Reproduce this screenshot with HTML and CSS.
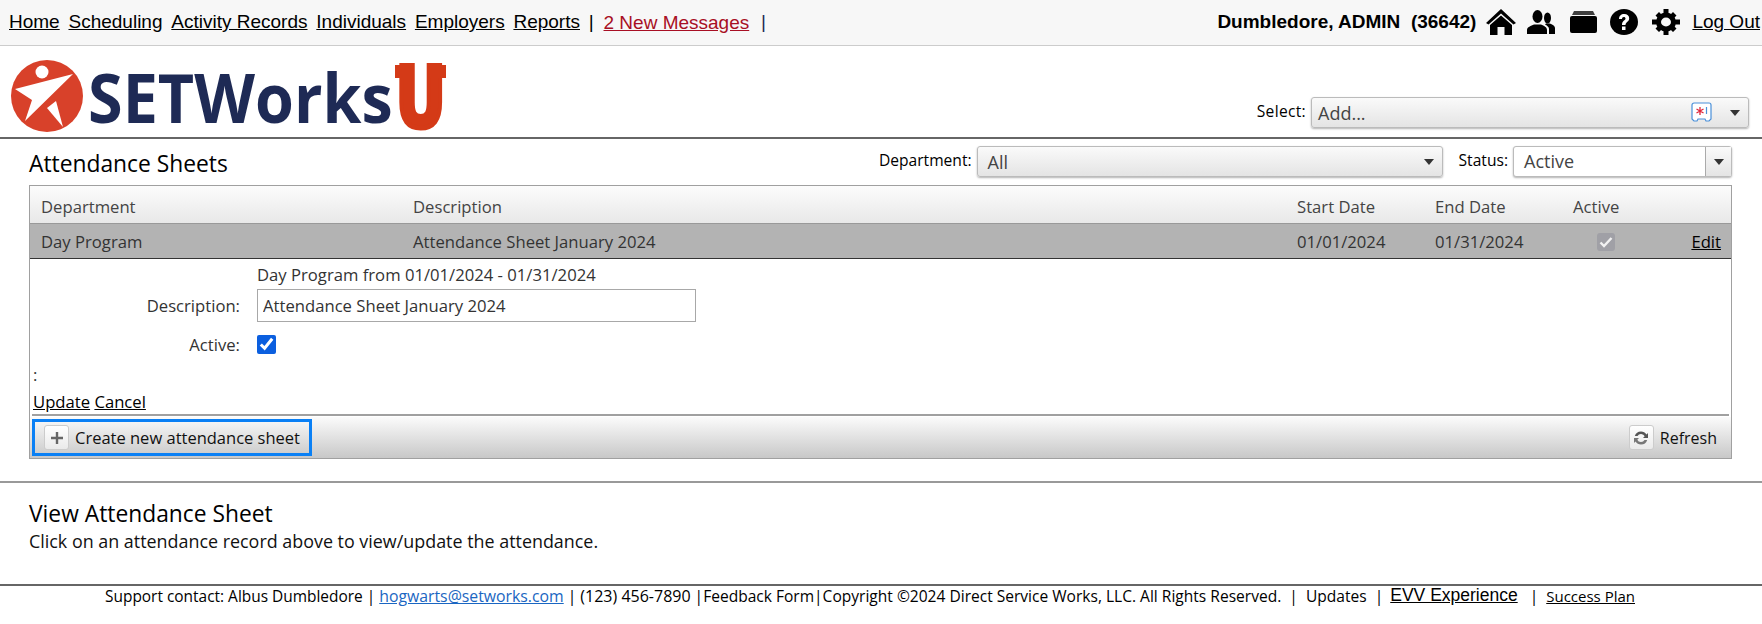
FILE: index.html
```html
<!DOCTYPE html>
<html lang="en">
<head>
<meta charset="utf-8">
<title>Attendance Sheets</title>
<link rel="stylesheet" href="styles.css">
</head>
<body>
<header class="topbar">
  <nav class="nav">
    <a href="#">Home</a><a href="#">Scheduling</a><a href="#">Activity Records</a><a href="#">Individuals</a><a href="#">Employers</a><a href="#">Reports</a>
    <span class="pipe">|</span>
    <a href="#" class="msg">2 New Messages</a>
    <span class="pipe navy">|</span>
  </nav>
  <div class="user">
    <b class="who">Dumbledore, ADMIN&nbsp; (36642)</b>
    <svg class="ic" width="30" height="26" viewBox="0 0 30 26"><path d="M15 0 L30 14 L27.500 15.500 L15 4.500 L2.500 15.500 L0 14Z"/><path d="M15 6.500 L26 16 V26 H18.500 V18 H11.500 V26 H4 V16Z"/></svg>
    <svg class="ic ic-p" width="28" height="24" viewBox="0 0 28 24"><ellipse cx="10.500" cy="6.500" rx="5" ry="6.500"/><path d="M0 24V20c0-3 4-4 7-5.500h7c3 1.500 6 2.500 6 5.500v4Z"/><ellipse cx="20.500" cy="8" rx="3.500" ry="5.500"/><path d="M19 13.500h4c2 1 5 2 5 4.500v6h-6v-5c0-2-2-3.500-4-4.500Z"/></svg>
    <svg class="ic ic-f" width="27" height="22" viewBox="0 0 27 22"><path d="M4 0h19l2 4H2Z" opacity=".75"/><rect y="5" width="27" height="17" rx="2"/></svg>
    <svg class="ic ic-q" width="28" height="26" viewBox="0 0 28 26"><ellipse cx="14" cy="13" rx="14" ry="13"/><path d="M9 10c0-3 2-5 5.200-5 3 0 5 1.800 5 4.300 0 3.700-3.700 3.700-3.700 6.700h-3.500c0-4.500 3.500-4.500 3.500-6.500 0-1-.7-1.600-1.700-1.600-1.100 0-1.800.8-1.800 2.100Z" fill="#fff"/><rect x="12" y="17.500" width="3.500" height="3.500" fill="#fff"/></svg>
    <svg class="ic ic-g" width="28" height="26" viewBox="0 0 28 26"><ellipse cx="14" cy="13" rx="7.500" ry="7" fill="none" stroke="#000" stroke-width="5"/><path d="M11.500 0h5v5h-5ZM11.500 21h5v5h-5ZM0 10.500h5v5H0ZM23 10.500h5v5h-5ZM3.500 6.500l3.500-3.500 3.500 3.500-3.500 3.500ZM17.500 6.500l3.500-3.500 3.500 3.500-3.500 3.500ZM3.500 19.500l3.500-3.500 3.500 3.500-3.500 3.500ZM17.500 19.500l3.500-3.500 3.500 3.500-3.500 3.500Z"/></svg>
    <a href="#" class="logout">Log Out</a>
  </div>
</header>

<section class="brand">
  <svg class="logo" width="440" height="76" viewBox="0 0 440 76">
    <circle cx="37" cy="36" r="36" fill="#d8412a"/>
    <circle cx="32" cy="12" r="6.500" fill="#fff"/>
    <polygon points="63,14 5,29 22,40 15,61" fill="#fff"/>
    <polygon points="37,48 46,41 53,67" fill="#fff"/>
    <text class="logo-word" transform="translate(78 63) scale(.925 1)">SETWorks</text>
    <text class="logo-u" transform="translate(385.500 67) scale(.74 1)">U</text>
    <rect class="logo-slab" x="385" y="5" width="19" height="13"/>
    <rect class="logo-slab" x="418" y="5" width="18" height="13"/>
  </svg>
  <div class="field select-field">
    <label class="flabel select-label">Select:</label>
    <div class="drop drop-add">
      <span class="drop-text">Add...</span>
      <svg class="add-ic" width="21" height="21" viewBox="0 0 21 21"><path d="M3 1h15a2 2 0 0 1 2 2v14l-2 2h-3l-1-2H7l-1 2H3l-2-2V3a2 2 0 0 1 2-2Z" fill="#fff" stroke="#4a90d9" stroke-width="1.200"/><path d="M9 5v8M5.500 7l7 4M12.500 7l-7 4" stroke="#e0283c" stroke-width="1.300"/><path d="M15.500 5v7" stroke="#4a90d9" stroke-width="1.200"/></svg>
      <i class="arrow"></i>
    </div>
  </div>
</section>

<main class="main">
  <div class="titlebar">
    <h1 class="title">Attendance Sheets</h1>
    <div class="filters">
      <div class="field">
        <label class="flabel">Department:</label>
        <div class="drop drop-dept"><span class="drop-text">All</span><i class="arrow"></i></div>
      </div>
      <div class="field">
        <label class="flabel">Status:</label>
        <div class="combo"><span class="combo-text">Active</span><span class="combo-btn"><i class="arrow"></i></span></div>
      </div>
    </div>
  </div>

  <div class="grid">
    <div class="cols head">
      <span>Department</span><span>Description</span><span>Start Date</span><span>End Date</span><span>Active</span><span></span>
    </div>
    <div class="cols row">
      <span>Day Program</span><span>Attendance Sheet January 2024</span><span>01/01/2024</span><span>01/31/2024</span>
      <span class="cell-check"><span class="row-check"><svg width="14" height="12" viewBox="0 0 14 12"><path d="M1.500 6.500l3.500 3.500 7.500-8" fill="none" stroke="#f2f2f2" stroke-width="2.400"/></svg></span></span>
      <a href="#" class="edit">Edit</a>
    </div>
    <div class="editor">
      <div class="form">
        <span></span><span class="form-line">Day Program from 01/01/2024 - 01/31/2024</span>
        <label class="form-label">Description:</label><input class="text-input" type="text" value="Attendance Sheet January 2024">
        <label class="form-label">Active:</label><input class="form-check" type="checkbox" checked>
      </div>
      <div class="colon">:</div>
      <div class="actions"><a href="#">Update</a> <a href="#">Cancel</a></div>
    </div>
    <div class="rule"></div>
    <div class="toolbar">
      <a href="#" class="create">
        <span class="tool-ic"><svg width="12" height="12" viewBox="0 0 12 12"><path d="M4.800 0h2.400v4.800H12v2.400H7.200V12H4.800V7.200H0V4.800h4.800Z" fill="#666"/></svg></span>
        Create new attendance sheet
      </a>
      <a href="#" class="refresh">
        <span class="tool-ic"><svg width="16" height="16" viewBox="0 0 16 16"><path d="M8 1.500a6.500 6.500 0 0 1 5.500 3L15 3v5h-5l1.700-1.700A4 4 0 0 0 4.500 6H1.800A6.500 6.500 0 0 1 8 1.500Z" fill="#555"/><path d="M8 14.500a6.500 6.500 0 0 1-5.500-3L1 13V8h5L4.300 9.700A4 4 0 0 0 11.500 10h2.700A6.500 6.500 0 0 1 8 14.500Z" fill="#777"/></svg></span>
        Refresh
      </a>
    </div>
  </div>
</main>

<section class="view">
  <h2 class="title">View Attendance Sheet</h2>
  <p class="view-text">Click on an attendance record above to view/update the attendance.</p>
</section>

<footer class="footer">
  <span class="foot-lead">Support contact: Albus Dumbledore&nbsp;|&nbsp;</span><a href="#" class="mail">hogwarts@setworks.com</a><span>&nbsp;|&nbsp;</span><span class="phone">(123) 456-7890</span><span>&nbsp;|Feedback Form|Copyright ©2024 Direct Service Works, LLC. All Rights Reserved. &nbsp;|&nbsp; Updates &nbsp;|&nbsp;</span>
  <a href="#" class="evv">EVV Experience</a><span class="foot-sep">|</span>
  <a href="#" class="plan">Success Plan</a>
</footer>
</body>
</html>
```
FILE: styles.css
```css
* { box-sizing: border-box; }
html, body { margin: 0; padding: 0; }
html { height: 624px; overflow: hidden; }
body {
  width: 1762px;
  height: 624px;
  overflow: hidden;
  background: #fff;
  color: #000;
  font-family: "Open Sans", "Liberation Sans", sans-serif;
}
a { color: inherit; }

/* top bar */
.topbar {
  height: 46px;
  background: #f7f7f7;
  border-bottom: 1px solid #ccc;
  display: flex;
  justify-content: space-between;
  align-items: center;
  font-family: "Liberation Sans", Arial, sans-serif;
  font-size: 19px;
  padding: 0 2px 1px 9px;
}
.nav { display: flex; align-items: center; gap: 8.8px; }
.navy { color: #1e2a55; margin-left: 3px; }
.msg { color: #a80f24; margin: 1px 0 0 1px; }
.user { display: flex; align-items: center; }
.who { margin-right: 10px; }
.ic { display: block; margin-right: 11px; }
.ic-p { margin-right: 15px; }
.ic-f { margin-right: 13px; }
.ic-q { margin-right: 14px; }
.ic-g { margin-right: 12px; }

/* brand row */
.brand {
  height: 93px;
  border-bottom: 2px solid #666;
  display: flex;
  justify-content: space-between;
  padding: 14px 13px 0 10px;
}
.logo { display: block; overflow: visible; }
.logo-word {
  font-family: "Open Sans", sans-serif;
  font-weight: 700;
  font-size: 68px;
  fill: #1e2a55;
}
.logo-u {
  font-family: "DejaVu Sans", sans-serif;
  font-weight: 700;
  font-size: 84px;
  fill: #d43a17;
  stroke: #d43a17;
  stroke-width: 5px;
}
.logo-slab { fill: #d43a17; }
.select-field { align-self: flex-end; margin-bottom: 9px; }
.field { display: flex; align-items: center; gap: 5px; }
.flabel { font-size: 15.6px; margin-top: -3px; }
.select-label { letter-spacing: .3px; }
.drop {
  height: 31px;
  border: 1px solid #bbb;
  border-radius: 3px;
  background: linear-gradient(#fafafa, #e4e4e4);
  box-shadow: 0 1px 2px rgba(0,0,0,.3);
  display: flex;
  align-items: center;
  padding: 0 4px 0 6px;
  color: #444;
  font-size: 18px;
}
.drop-text { flex: 1; }
.drop-add { width: 438px; }
.drop-dept { width: 466px; margin-right: 16px; padding-left: 10px; }
.add-ic { display: block; margin-right: 18px; }
.arrow {
  display: block;
  width: 0;
  height: 0;
  margin: 0 4px 0 0;
  border-left: 5px solid transparent;
  border-right: 5px solid transparent;
  border-top: 6px solid #333;
}
.combo {
  width: 219px;
  height: 31px;
  border: 1px solid #bbb;
  border-radius: 3px;
  background: #fff;
  box-shadow: 0 1px 2px rgba(0,0,0,.3);
  display: flex;
  color: #444;
  font-size: 18px;
}
.combo-text { flex: 1; padding-left: 10px; line-height: 29px; }
.combo-btn {
  width: 26px;
  border-left: 1px solid #aaa;
  background: linear-gradient(#fafafa, #e4e4e4);
  display: flex;
  align-items: center;
  justify-content: center;
}
.combo-btn .arrow { margin: 0; }

/* main */
.main { padding: 7px 30px 0 29px; }
.titlebar { display: flex; justify-content: space-between; align-items: flex-start; height: 39px; }
.titlebar .title { margin-top: 2px; }
.title { margin: 0; font-size: 22.8px; font-weight: 400; line-height: 32px; }
.filters { display: flex; }
.grid { border: 1px solid #a0a0a0; }
.cols {
  display: grid;
  grid-template-columns: 372px 884px 138px 138px 1fr auto;
  padding: 0 10px 0 11px;
  align-items: center;
  font-size: 16.67px;
  color: #444;
}
.head {
  height: 38px;
  padding-top: 3px;
  background: linear-gradient(#fcfcfc, #e8e8e8);
  border-bottom: 1px solid #999;
}
.row {
  height: 35px;
  padding-top: 1px;
  background: #b3b3b3;
  border-bottom: 1px solid #333;
  color: #333;
}
.cell-check { display: flex; padding-left: 24px; }
.row-check {
  width: 18px;
  height: 18px;
  border-radius: 3px;
  background: #a0a0a6;
  display: flex;
  align-items: center;
  justify-content: center;
}
.edit { color: #000; }

.editor { height: 155px; padding: 4px 0 0 3px; color: #333; font-size: 16.67px; }
.form {
  display: grid;
  grid-template-columns: 207px 1fr;
  column-gap: 17px;
  align-items: center;
}
.form-line { height: 26px; line-height: 24px; }
.form-label { text-align: right; }
.text-input {
  width: 439px;
  height: 33px;
  border: 1px solid #a8a8a8;
  padding: 0 5px;
  margin: 0 0 11px;
  font: inherit;
  color: #333;
}
.form-label { margin-bottom: 11px; }
.form-label:last-of-type { margin-bottom: 0; }
.form-check { width: 19px; height: 19px; margin: 0; accent-color: #0b5fdf; }
.colon { margin-top: 8px; height: 22px; line-height: 22px; }
.actions { margin-top: 5px; line-height: 22px; color: #000; }
.rule { height: 2px; margin: 0 2px; background: #a0a0a0; }
.toolbar {
  height: 41px;
  margin-top: 1px;
  background: linear-gradient(#fbfbfb, #c8c8c8);
  display: flex;
  justify-content: space-between;
  align-items: center;
  padding: 0 14px 0 2px;
  font-size: 16.5px;
}
.create, .refresh {
  display: flex;
  align-items: center;
  gap: 6px;
  text-decoration: none;
  color: #111;
}
.create {
  width: 280px;
  height: 37px;
  border: 3px solid #0a80f5;
  padding-left: 9px;
  line-height: 33px;
}
.refresh { font-size: 16px; }
.tool-ic {
  width: 25px;
  height: 25px;
  border: 1px solid #ccc;
  border-radius: 3px;
  background: linear-gradient(#fff, #eaeaea);
  display: flex;
  align-items: center;
  justify-content: center;
}

/* view */
.view {
  height: 103px;
  margin-top: 22px;
  border-top: 2px solid #999;
  padding: 15px 29px 0;
}
.view-text { margin: -2px 0 0; font-size: 17.9px; line-height: 26px; color: #111; }

/* footer */
.footer {
  border-top: 2px solid #666;
  padding: 0 0 6px 105px;
  font-size: 15.55px;
  white-space: nowrap;
  display: flex;
  align-items: center;
  height: 28px;
}
.foot-lead { font-size: 15.44px; }
.mail { color: #1a66c2; font-size: 15.8px; }
.phone { font-size: 16px; }
.evv { font-family: "Liberation Sans", Arial, sans-serif; font-size: 17.5px; margin: -2px 0 0 3px; }
.foot-sep { margin: 0 8px 0 12px; }
.plan { font-size: 15px; }
```
